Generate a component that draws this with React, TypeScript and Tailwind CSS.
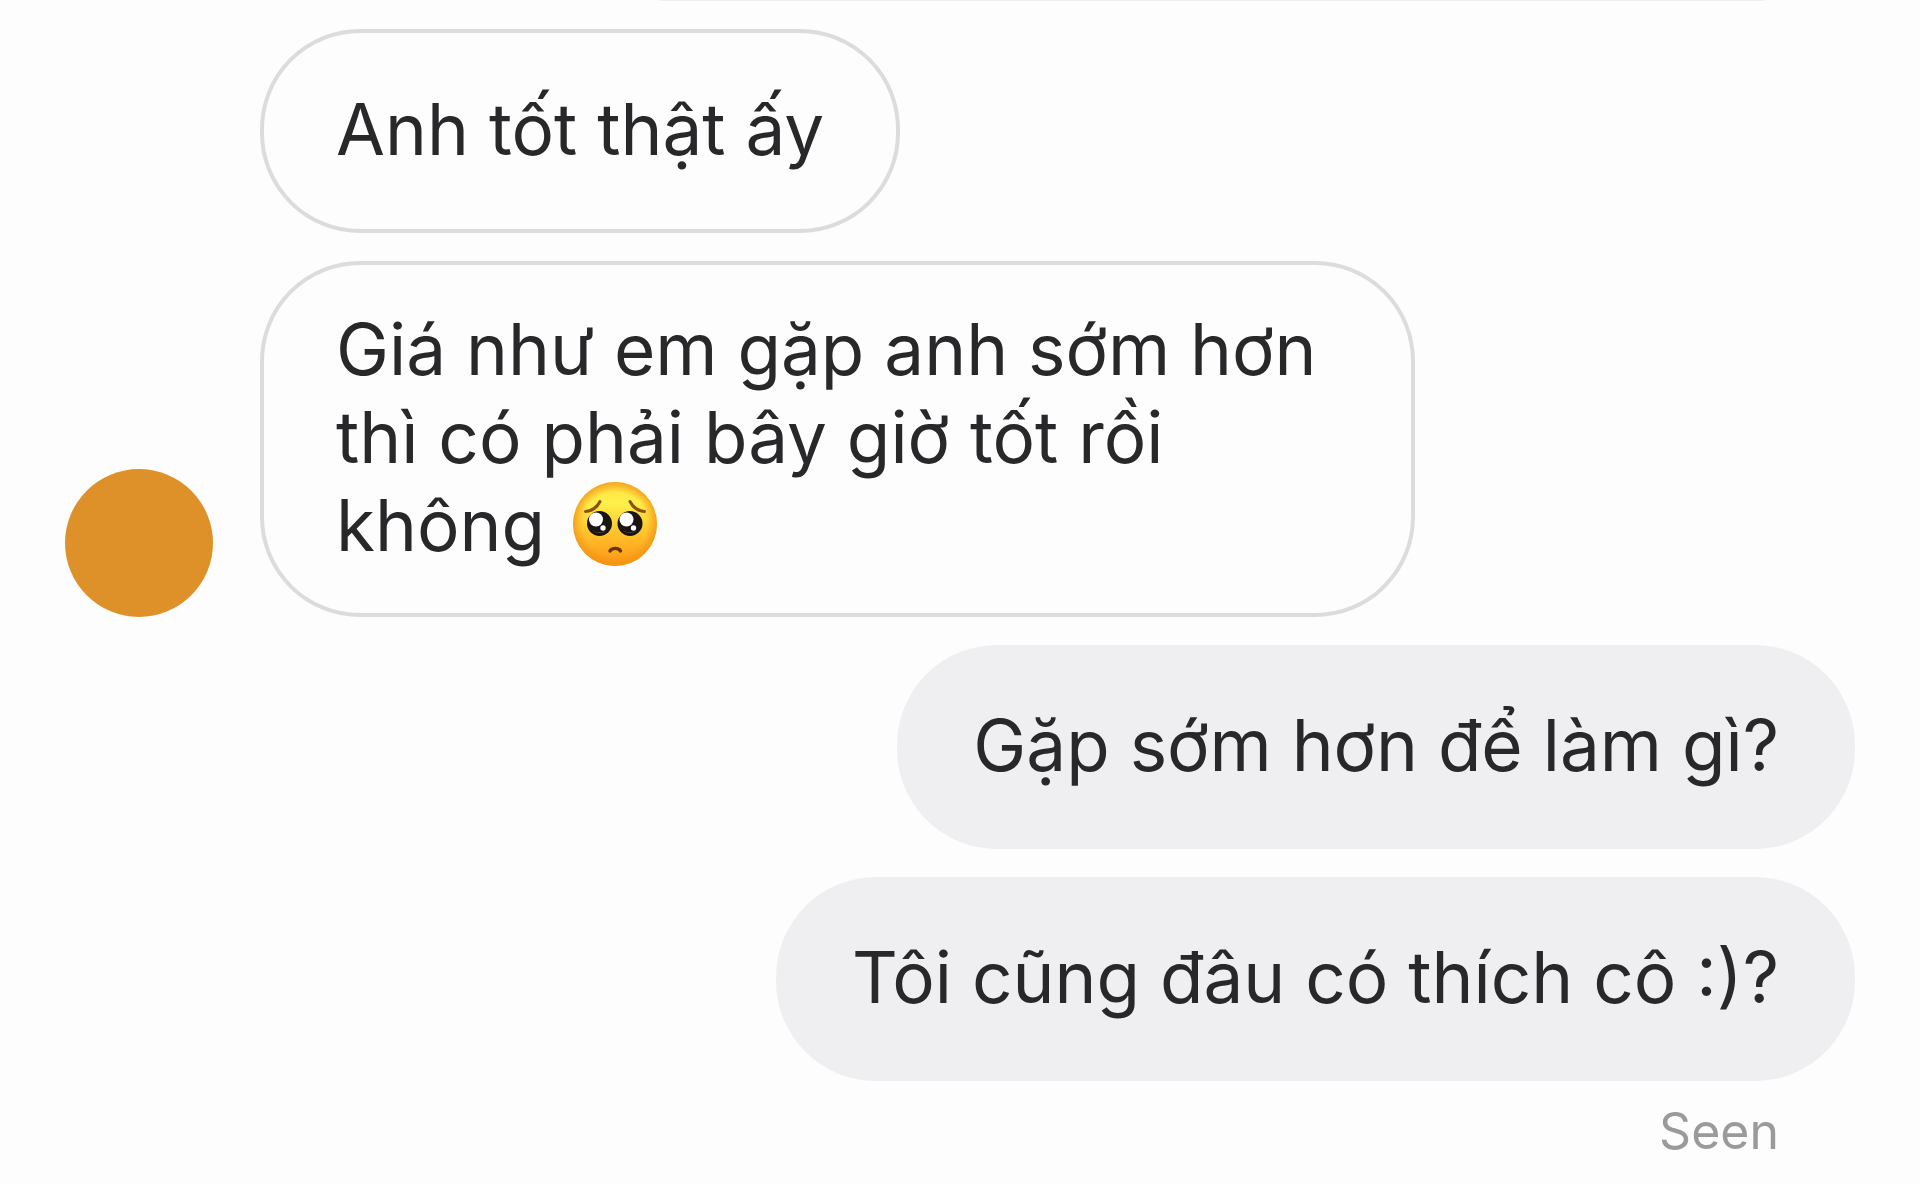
import React from "react";
import clsx from "clsx";

interface BubbleProps {
  side: "left" | "right";
  children: React.ReactNode;
}

const PleadingFace: React.FC = () => (
  <svg
    viewBox="0 0 84 84"
    role="img"
    aria-label="pleading face"
    className="inline-block size-[84px] ml-2 -my-3 align-[-3px]"
  >
    <defs>
      <linearGradient id="face" x1="0" y1="0" x2="0" y2="1">
        <stop offset="0" stopColor="#ffe03c" />
        <stop offset="0.25" stopColor="#fff04c" />
        <stop offset="0.6" stopColor="#ffc42c" />
        <stop offset="1" stopColor="#fb9413" />
      </linearGradient>
      <radialGradient id="rim" cx="0.5" cy="0.5" r="0.5">
        <stop offset="0.76" stopColor="#f39316" stopOpacity="0" />
        <stop offset="1" stopColor="#f39316" stopOpacity="0.8" />
      </radialGradient>
    </defs>
    <circle cx="42" cy="42" r="42" fill="url(#face)" />
    <circle cx="42" cy="42" r="42" fill="url(#rim)" />
    {/* Eyebrows */}
    <g fill="none" stroke="#8a5208" strokeWidth="3" strokeLinecap="round">
      <path d="M12.5 29.5 C19 29 24 25.5 27 19.5" />
      <path d="M71.5 29.5 C65 29 60 25.5 57 19.5" />
    </g>
    {/* Eyes */}
    <circle cx="26.5" cy="41.5" r="12.5" fill="#1a1413" />
    <circle cx="57" cy="41.5" r="12.5" fill="#1a1413" />
    <path d="M18 47 A11 11 0 0 0 35 47 A10 7 0 0 1 18 47Z" fill="#5c5553" />
    <path d="M48.5 47 A11 11 0 0 0 65.5 47 A10 7 0 0 1 48.5 47Z" fill="#5c5553" />
    <circle cx="23" cy="37.5" r="7" fill="#fff" />
    <circle cx="53.5" cy="37.5" r="7" fill="#fff" />
    <circle cx="30" cy="46" r="2.7" fill="#fff" />
    <circle cx="60.5" cy="46" r="2.7" fill="#fff" />
    {/* Mouth */}
    <path
      d="M37 69 C38.5 65.5 46 65.5 47.5 69"
      fill="none"
      stroke="#6a3306"
      strokeWidth="3.4"
      strokeLinecap="round"
    />
  </svg>
);

const Bubble: React.FC<BubbleProps> = ({ side, children }) => (
  <p
    className={clsx(
      "flex min-h-[204px] max-w-[1155px] items-center rounded-[100px] pt-10 pb-11 text-[71px] leading-[88px]",
      side === "left" ? "border-4 border-[#dcdcde] px-[72px]" : "bg-[#efeef1] px-[76px]"
    )}
  >
    <span>{children}</span>
  </p>
);

export default function App() {
  return (
    <main className="flex min-h-screen flex-col gap-7 bg-[#fdfdfd] px-[65px] font-['Inter','Liberation_Sans',sans-serif] text-[#28272a]">
      {/* Lower edge of the message scrolled out above */}
      <div className="mr-[91px] h-px w-[1104px] self-end bg-[#efeef1]" />

      <div className="flex items-end gap-[47px]">
        <div className="size-[148px] shrink-0 rounded-full bg-[#de9129]" />
        <div className="flex flex-col items-start gap-7">
          <Bubble side="left">Anh tốt thật ấy</Bubble>
          <Bubble side="left">
            Giá như em gặp anh sớm hơn thì có phải bây giờ tốt rồi không <PleadingFace />
          </Bubble>
        </div>
      </div>

      <div className="flex flex-col items-end gap-7">
        <Bubble side="right">Gặp sớm hơn để làm gì?</Bubble>
        <Bubble side="right">Tôi cũng đâu có thích cô :)?</Bubble>
        <span className="mr-[76px] text-[50px] leading-[44px] text-[#9a999c]">Seen</span>
      </div>
    </main>
  );
}
